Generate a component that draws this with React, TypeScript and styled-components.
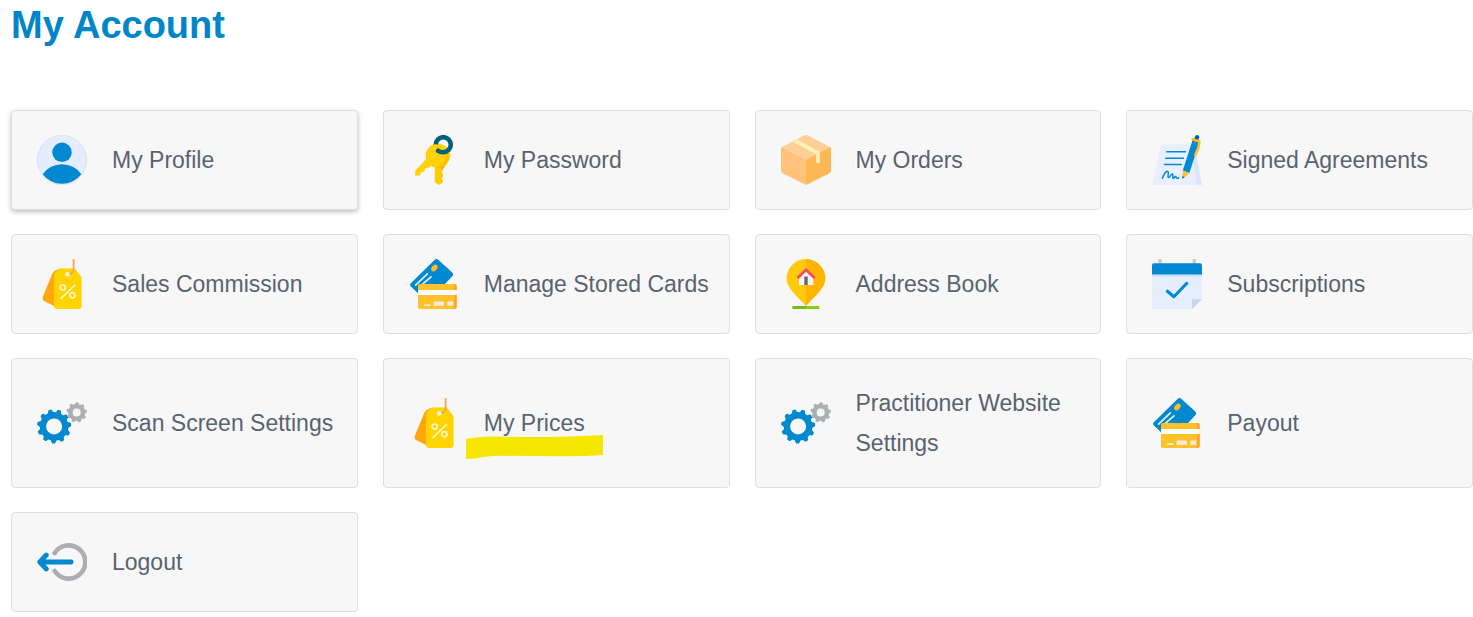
import React from "react";
import styled, { createGlobalStyle, css } from "styled-components";

const GlobalStyle = createGlobalStyle`
  *, *::before, *::after { box-sizing: border-box; }
  body {
    margin: 0;
    background: #fff;
    color: #59636f;
    font-family: "Helvetica Neue", "Liberation Sans", Arial, sans-serif;
  }
`;

const Page = styled.main`
  padding: 0 0 4px 11px;
`;

const Title = styled.h1`
  margin: 0 0 60px;
  font-size: 38px;
  line-height: 50px;
  font-weight: 700;
  color: #0085ca;
`;

const Tiles = styled.nav`
  display: grid;
  grid-template-columns: repeat(4, minmax(0, 1fr));
  gap: 24px 25px;
`;

const Tile = styled.a<{ $raised?: boolean }>`
  display: flex;
  align-items: center;
  gap: 25px;
  padding: 24px 12px 24px 25px;
  border: 1px solid #dfdfdf;
  border-radius: 4px;
  background: #f7f7f7;
  color: inherit;
  text-decoration: none;
  ${(p) =>
    p.$raised &&
    css`
      box-shadow: 0 2px 5px rgba(0, 0, 0, 0.26);
    `}
`;

const Icon = styled.svg`
  flex: none;
  display: block;
  width: 50px;
  height: 50px;
`;

const Label = styled.span`
  position: relative;
  font-size: 23px;
  line-height: 40px;
`;

const Marker = styled.svg`
  position: absolute;
  top: 32px;
  left: -18px;
  width: 137px;
  height: 24px;
`;

const BLUE = "#0088d1";
const GREY = "#adb0b2";

const Art = ({ children }: { children: React.ReactNode }) => (
  <Icon viewBox="0 0 50 50" fill="none" aria-hidden="true">
    {children}
  </Icon>
);

const ProfileIcon = () => (
  <Art>
    <circle cx="25" cy="25" r="24.6" fill="#e3edff" stroke="#d5dae2" strokeWidth="0.7" />
    <circle cx="25" cy="17.3" r="9.7" fill={BLUE} />
    <path d="M5.7 39.2A23.6 23.6 0 0 1 44.3 39.2A24.3 24.3 0 0 1 5.7 39.2Z" fill={BLUE} />
  </Art>
);

const KeysIcon = () => (
  <Art>
    <path d="M19 22L6.5 35.5L6 40.5L10.5 40.7L12 37.6L15.3 36.6L16 33.4L19.6 32.4L28 28Z" fill="#ffd106" />
    <path d="M25.8 28V47L29.5 50L33.8 47.5V45L32.6 43.5L34 41.5V39L32.6 37.2L34 35V29Z" fill="#ffcb05" />
    <path d="M27 31.5Q31 34 37 30L34 34.2Z" fill="#f7ad00" />
    <circle cx="28.8" cy="20.6" r="12.1" fill="#ffd108" />
    <path d="M37.5 12.2A12.1 12.1 0 0 1 26 32.3C34 31 39 25 37.5 12.2Z" fill="#ffbd05" />
    <path d="M26.8 9.8A7.5 7.5 0 1 1 34.3 17.2Q31.5 17.4 29.2 15.8" stroke="#006080" strokeWidth="4.6" strokeLinecap="round" />
    <path d="M24 9.6Q29.5 8.6 33.5 11.4L30.8 13.4Q26.5 11.5 23.5 13.2Z" fill="#ffd108" />
  </Art>
);

const BoxIcon = () => (
  <Art>
    <path d="M23 .5Q25 -.4 27 .5L49 12L25 25L1 12Z" fill="#ffd095" />
    <path d="M1 12L25 24.7V50L2 38.5Q0 37.5 0 35.5V13.5Q0 12.4 1 12Z" fill="#ffc37c" />
    <path d="M49 12L25 24.7V50L48 38.5Q50 37.5 50 35.5V13.5Q50 12.4 49 12Z" fill="#ffb655" />
    <path d="M11.8 7L16.2 4.6L38.8 17V27.2Q38.8 28 38 28H36Q35.2 28 35.2 27.2V19.2Z" fill="#fff0b8" />
  </Art>
);

const AgreementIcon = () => (
  <Art>
    <path d="M10.5 9.3H41Q42.7 9.3 43.1 11L50 50H0L8.7 10.8Q9 9.3 10.5 9.3Z" fill="#e8f0ff" />
    <path d="M43 14L50 50H44.5L40.5 24Z" fill="#dde7fa" />
    <path d="M14.8 16.7H33.4M13.8 23.2H31.4M12.5 29.5H29.2" stroke={BLUE} strokeWidth="1.6" strokeLinecap="round" />
    <path d="M10.4 43.3C11.6 39.5 14 35.9 15.8 36.4C17.6 37.4 14.8 42 16.4 42.6C18 42.6 19.2 38.6 20.6 39C21.8 39.8 19.8 43.2 21.4 43.4C22.8 43 22.8 41 23.8 41.6C24.4 43.6 25.4 43.6 26.8 42.8" stroke={BLUE} strokeWidth="1.5" strokeLinecap="round" />
    <path d="M43.2 1.2Q44.2 -.4 46 .2Q47.7 1 47.2 2.6L46 5.6L42 4.2Z" fill="#08659f" />
    <path d="M40.6 5L47.2 7.2L37.4 37.9L30.8 35.4Z" fill={BLUE} />
    <path d="M30.8 35.4L37.4 37.9L32.2 43L30.4 42.2Z" fill="#ffbf38" />
    <path d="M30.4 41L32.6 42L30.3 44Z" fill="#08659f" />
    <path d="M40.7 4.2L47.4 6.6L46.4 12.4L43.2 20.3" stroke="#ffba28" strokeWidth="2.6" strokeLinecap="round" strokeLinejoin="round" />
  </Art>
);

const TagIcon = () => (
  <Art>
    <path d="M24 9.6Q18 10.6 15.4 14.5L5.8 38Q5 41 7.5 42.2L19 48Z" fill="#ffa60a" />
    <path d="M17 16.5Q17 15 18 14L21.5 10.5Q22.5 9.6 24 9.6H36.6Q37.8 9.6 38.6 10.6L43.8 17.2Q44.6 18.2 44.6 19.4V47Q44.6 50 41.6 50H20Q17 50 17 47Z" fill="#ffd400" />
    <circle cx="30.4" cy="15.3" r="2.4" fill="#fff6d5" />
    <path d="M36.6 0V10Q36.6 14 32.3 15" stroke="#f5a64d" strokeWidth="1.8" />
    <path d="M37.5 26.5L24 39.3" stroke="#fff6c4" strokeWidth="1.7" strokeLinecap="round" />
    <circle cx="25.8" cy="28.6" r="2.6" stroke="#fff6c4" strokeWidth="1.7" />
    <circle cx="35.4" cy="36.2" r="2.6" stroke="#fff6c4" strokeWidth="1.7" />
  </Art>
);

const CardsIcon = () => (
  <Art>
    <path d="M25.5 .9Q27.6 -.8 29.5 .9L43.2 13.5Q45 15.3 43.3 17.2L35 26H9.3V34.4L1.7 27.3Q.3 25.7 1.8 24.2Z" fill={BLUE} />
    <ellipse cx="25.4" cy="9" rx="2.6" ry="3.9" transform="rotate(40 25.4 9)" fill="#fdbd22" />
    <path d="M6.6 26.2L18.4 14.8M13.6 25.2L22 17.8" stroke="#e4f5ff" strokeWidth="1.6" strokeLinecap="round" />
    <rect x="9.2" y="25" width="38.6" height="25" rx="2" fill="#ffa51d" />
    <rect x="9.2" y="25" width="36" height="25" rx="2" fill="#ffc22b" />
    <path d="M9.2 31H47.8V36H9.2Z" fill="#fff" />
    <path d="M16 46.2H20.7" stroke="#fff1cb" strokeWidth="1.8" strokeLinecap="round" />
    <rect x="24.6" y="42.4" width="10.4" height="4.4" rx="0.6" fill="#f2ebdf" />
    <rect x="38.3" y="42.4" width="5.8" height="4.4" rx="0.6" fill="#f2ebdf" />
  </Art>
);

const AddressIcon = () => (
  <Art>
    <path d="M25 0A19.4 19.4 0 0 0 5.6 19.3C5.6 29 14 35 25 47Z" fill="#ffc90c" />
    <path d="M25 0A19.4 19.4 0 0 1 44.4 19.3C44.4 29 36 35 25 47Z" fill="#ffb400" />
    <path d="M18 17.5L25 11L32.3 17.5V26H18Z" fill="#f5f5fb" />
    <path d="M23.3 17.5H26.7V26H23.3Z" fill="#68666b" />
    <path d="M16.6 19L25 10.8L33.6 19" stroke="#ff465d" strokeWidth="2.7" />
    <path d="M11.4 47H25V50H11.4Z" fill="#72bd19" />
    <path d="M25 47H38.4V50H25Z" fill="#8cce0c" />
  </Art>
);

const CalendarIcon = () => (
  <Art>
    <path d="M6.3 0H9.6V6H6.3ZM40.6 0H43.9V6H40.6Z" fill="#c3c9ce" />
    <path d="M0 12H50V40L40 50H0Z" fill="#e4eefc" />
    <path d="M0 15H50V18H0Z" fill="#d3e2f5" />
    <path d="M0 15.4V6.3Q0 4.3 2 4.3H48Q50 4.3 50 6.3V15.4Z" fill={BLUE} />
    <path d="M40 40H50L40 50Z" fill="#c8d5ea" />
    <path d="M15.4 32.2L21.9 37.7L34.8 24.3" stroke={BLUE} strokeWidth="3.1" strokeLinecap="round" strokeLinejoin="round" />
  </Art>
);

// Outline of a cog whose rim swells smoothly into rounded teeth.
const cog = (cx: number, cy: number, radius: number, depth: number, teeth: number) => {
  const points: string[] = [];
  const count = teeth * 16;
  for (let i = 0; i < count; i++) {
    const a = (i / count) * Math.PI * 2;
    const wave = Math.max(-1, Math.min(1, Math.cos(teeth * a + 1.2) * 1.8));
    const r = radius + depth * wave;
    points.push(`${(cx + Math.cos(a) * r).toFixed(2)},${(cy + Math.sin(a) * r).toFixed(2)}`);
  }
  return points.join(" ");
};

const GearsIcon = () => (
  <Art>
    <polygon points={cog(17.1, 28.4, 15.7, 1.4, 11)} fill={BLUE} />
    <circle cx="17.1" cy="28.4" r="8" fill="#f7f7f7" />
    <polygon points={cog(39.7, 14.4, 9.3, 0.9, 9)} fill={GREY} />
    <circle cx="39.7" cy="14.4" r="4" fill="#f7f7f7" />
  </Art>
);

const LogoutIcon = () => (
  <Art>
    <path d="M17.7 16A16.6 16.6 0 1 1 17.7 34" stroke="#adadb2" strokeWidth="4.6" strokeLinecap="round" />
    <path d="M2.8 25H34.2M9.3 18L2.8 25L9.3 32" stroke={BLUE} strokeWidth="4.8" strokeLinecap="round" strokeLinejoin="round" />
  </Art>
);

type Item = {
  label: string;
  icon: React.ComponentType;
  raised?: boolean;
  marked?: boolean;
};

const items: Item[] = [
  { label: "My Profile", icon: ProfileIcon, raised: true },
  { label: "My Password", icon: KeysIcon },
  { label: "My Orders", icon: BoxIcon },
  { label: "Signed Agreements", icon: AgreementIcon },
  { label: "Sales Commission", icon: TagIcon },
  { label: "Manage Stored Cards", icon: CardsIcon },
  { label: "Address Book", icon: AddressIcon },
  { label: "Subscriptions", icon: CalendarIcon },
  { label: "Scan Screen Settings", icon: GearsIcon },
  { label: "My Prices", icon: TagIcon, marked: true },
  { label: "Practitioner Website Settings", icon: GearsIcon },
  { label: "Payout", icon: CardsIcon },
  { label: "Logout", icon: LogoutIcon },
];

export default function App() {
  return (
    <>
      <GlobalStyle />
      <Page>
        <Title>My Account</Title>
        <Tiles aria-label="My Account">
          {items.map(({ label, icon: Glyph, raised, marked }) => (
            <Tile key={label} href="#" $raised={raised}>
              <Glyph />
              <Label>
                {label}
                {marked && (
                  <Marker viewBox="0 0 137 24" aria-hidden="true">
                    <path d="M0 4Q12 1.5 28 1.4Q70 2.6 105 1.4L137 0V20Q118 21.4 95 21.2L30 20.8Q18 21.5 9 23.5L0 24Z" fill="#f7e600" />
                  </Marker>
                )}
              </Label>
            </Tile>
          ))}
        </Tiles>
      </Page>
    </>
  );
}
